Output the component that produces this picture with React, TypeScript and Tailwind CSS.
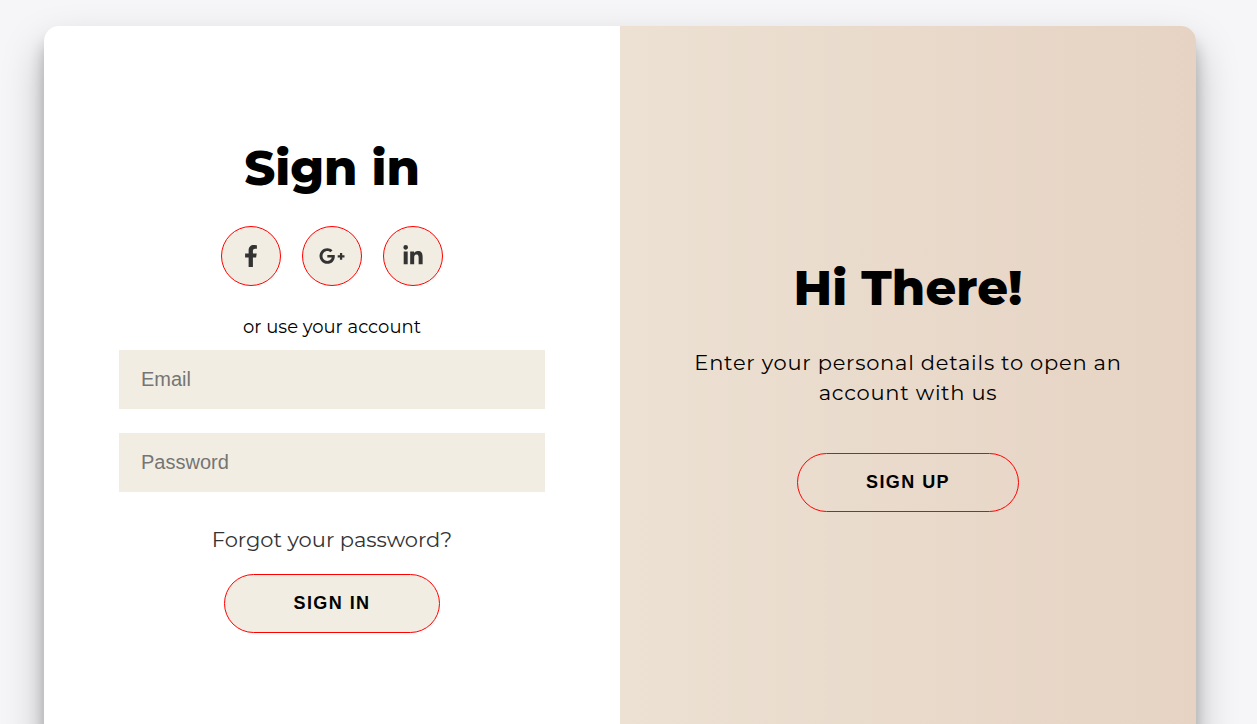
import type { ReactNode } from "react";
import { FaFacebookF, FaGooglePlusG, FaLinkedinIn } from "react-icons/fa";

function SocialLink({ label, children }: { label: string; children: ReactNode }) {
  return (
    <a
      href="#"
      aria-label={label}
      className="flex size-15 items-center justify-center rounded-full border border-[#ff0000] bg-[#f2ede2] text-[#333333]"
    >
      {children}
    </a>
  );
}

function Field({ type, label }: { type: string; label: string }) {
  return (
    <input
      type={type}
      aria-label={label}
      placeholder={label}
      className="h-[59px] w-full bg-[#f2ede2] px-[22px] font-['Liberation_Sans',sans-serif] text-[20px] text-black outline-none placeholder:text-[#757575]"
    />
  );
}

const buttonClass =
  "h-[59px] rounded-full border border-[#ff0000] px-[68px] font-['Liberation_Sans',sans-serif] text-[18px] font-bold uppercase tracking-[0.08em] text-black";

export default function App() {
  return (
    <main className="flex h-screen justify-center overflow-hidden bg-[#f6f6f8] pt-[26px] pr-[17px] font-['Montserrat','Inter',sans-serif] text-black">
      <div className="grid min-h-[720px] w-full max-w-[1152px] shrink-0 grid-cols-2 self-start overflow-hidden rounded-[15px] bg-white shadow-[0_21px_42px_rgba(0,0,0,0.25),0_15px_15px_rgba(0,0,0,0.22)]">
        <form
          className="flex flex-col items-center justify-center px-[75px]"
          onSubmit={(event) => event.preventDefault()}
        >
          <h1 className="text-[48px] leading-[56px] font-extrabold">Sign in</h1>
          <div className="my-[30px] flex gap-[21px]">
            <SocialLink label="Facebook">
              <FaFacebookF size={22} />
            </SocialLink>
            <SocialLink label="Google Plus">
              <FaGooglePlusG size={26} />
            </SocialLink>
            <SocialLink label="LinkedIn">
              <FaLinkedinIn size={22} />
            </SocialLink>
          </div>
          <span className="text-[18px] leading-[22px]">or use your account</span>
          <div className="mt-3 flex w-full flex-col gap-6">
            <Field type="email" label="Email" />
            <Field type="password" label="Password" />
          </div>
          <a href="#" className="mt-[33px] mb-[19px] text-[21px] leading-[30px] text-[#333333]">
            Forgot your password?
          </a>
          <button type="submit" className={`${buttonClass} bg-[#f2ede2]`}>
            Sign In
          </button>
        </form>
        <section className="flex flex-col items-center justify-center bg-linear-to-r from-[#ece1d3] to-[#e6d3c3] px-15 text-center">
          <h1 className="text-[48px] leading-[56px] font-extrabold">Hi There!</h1>
          <p className="mt-8 mb-[45px] text-[21px] leading-[30px] tracking-[0.035em]">
            Enter your personal details to open an account with us
          </p>
          <button type="button" className={buttonClass}>
            Sign Up
          </button>
        </section>
      </div>
    </main>
  );
}
